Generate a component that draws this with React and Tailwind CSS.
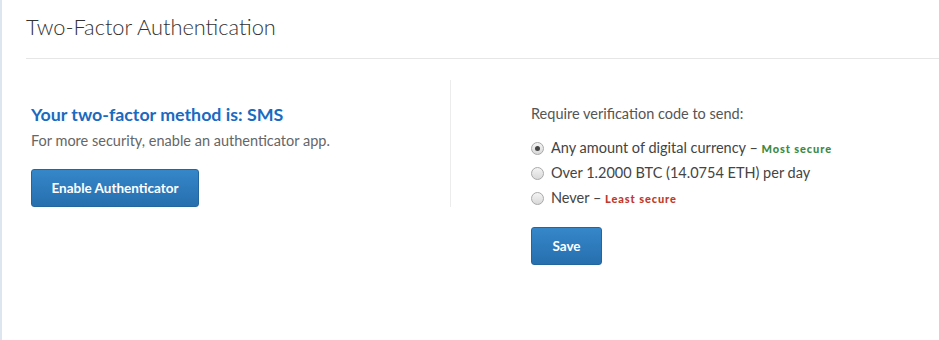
import React, { useState } from "react";

const Radio = ({ checked }) => (
  <span className="relative inline-flex h-[13px] w-[13px] shrink-0 items-center justify-center rounded-full border border-[#a9a9a9] bg-gradient-to-b from-[#f4f4f4] to-[#d9d9d9]">
    {checked && <span className="h-[5px] w-[5px] rounded-full bg-[#444]" />}
  </span>
);

const options = [
  { id: "any", label: "Any amount of digital currency", tag: "Most secure", tagClass: "text-[#3c8a3f]" },
  { id: "over", label: "Over 1.2000 BTC (14.0754 ETH) per day" },
  { id: "never", label: "Never", tag: "Least secure", tagClass: "text-[#c0392b]" },
];

const App = () => {
  const [choice, setChoice] = useState("any");

  return (
    <div className="h-[340px] w-[939px] overflow-hidden border-l-2 border-[#dde5ee] bg-white font-['Lato',sans-serif] text-[#333]">
      <div className="pl-[24px]">
        <div className="flex h-[59px] items-center border-b border-[#e6e6e6] pb-[4px]">
          <h1 className="text-[21.8px] font-light text-[#333]">Two-Factor Authentication</h1>
        </div>

        <div className="mt-[21px] flex items-start">
          <div className="w-[425px] border-r border-[#ececec] pl-[5px] pt-[23px]">
            <h2 className="text-[17.8px] font-bold leading-[22px] text-[#1a6ac0]">
              Your two-factor method is: SMS
            </h2>
            <p className="mt-[6px] text-[14.5px] leading-[20px] text-[#666]">
              For more security, enable an authenticator app.
            </p>
            <button className="mt-[18px] h-[38px] w-[168px] rounded-[3px] border border-[#23659f] bg-gradient-to-b from-[#3587c9] to-[#276fae] text-[13.5px] font-bold text-white">
              Enable Authenticator
            </button>
          </div>

          <div className="pl-[80px] pt-[24px]">
            <p className="text-[14.5px] leading-[20px] text-[#555]">Require verification code to send:</p>
            <div className="mt-[14px] flex flex-col gap-[5px]">
              {options.map((o) => (
                <label
                  key={o.id}
                  onClick={() => setChoice(o.id)}
                  className="flex h-[20px] cursor-pointer items-center gap-[7px] text-[14.5px] text-[#444]"
                >
                  <Radio checked={choice === o.id} />
                  <span>
                    {o.label}
                    {o.tag && (
                      <>
                        {" "}– <span className={`text-[11px] font-black tracking-[0.9px] ${o.tagClass}`}>{o.tag}</span>
                      </>
                    )}
                  </span>
                </label>
              ))}
            </div>
            <button className="mt-[19px] h-[38px] w-[71px] rounded-[3px] border border-[#23659f] bg-gradient-to-b from-[#3587c9] to-[#276fae] text-[13.5px] font-bold text-white">
              Save
            </button>
          </div>
        </div>
      </div>
    </div>
  );
};

export default App;
